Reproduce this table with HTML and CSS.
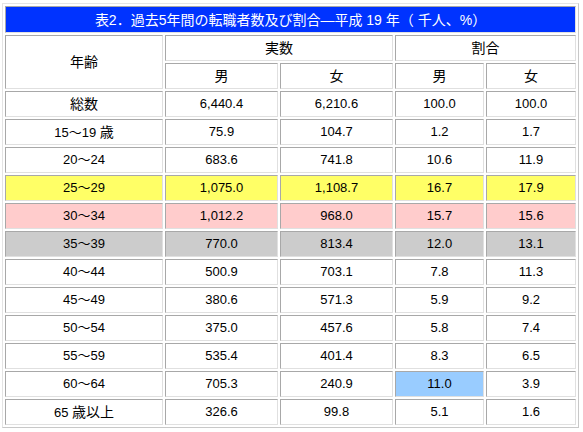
FILE: index.html
```html
<!DOCTYPE html>
<html lang="ja">
<head>
<meta charset="utf-8">
<link rel="stylesheet" href="styles.css">
</head>
<body>
<div class="wrap">
<table class="tbl">
  <colgroup>
    <col class="c1"><col class="c2"><col class="c3"><col class="c4"><col class="c5">
  </colgroup>
  <tr class="title-row"><td colspan="5" class="title">表2．過去5年間の転職者数及び割合―平成 19 年（ 千人、%）</td></tr>
  <tr><td rowspan="2"><span class="jp">年齢</span></td><td colspan="2"><span class="jp">実数</span></td><td colspan="2"><span class="jp">割合</span></td></tr>
  <tr><td><span class="jp">男</span></td><td><span class="jp">女</span></td><td><span class="jp">男</span></td><td><span class="jp">女</span></td></tr>
  <tr><td><span class="jp">総数</span></td><td>6,440.4</td><td>6,210.6</td><td>100.0</td><td>100.0</td></tr>
  <tr><td>15～19 <span class="jp">歳</span></td><td>75.9</td><td>104.7</td><td>1.2</td><td>1.7</td></tr>
  <tr><td>20～24</td><td>683.6</td><td>741.8</td><td>10.6</td><td>11.9</td></tr>
  <tr class="yellow"><td>25～29</td><td>1,075.0</td><td>1,108.7</td><td>16.7</td><td>17.9</td></tr>
  <tr class="pink"><td>30～34</td><td>1,012.2</td><td>968.0</td><td>15.7</td><td>15.6</td></tr>
  <tr class="gray"><td>35～39</td><td>770.0</td><td>813.4</td><td>12.0</td><td>13.1</td></tr>
  <tr><td>40～44</td><td>500.9</td><td>703.1</td><td>7.8</td><td>11.3</td></tr>
  <tr><td>45～49</td><td>380.6</td><td>571.3</td><td>5.9</td><td>9.2</td></tr>
  <tr><td>50～54</td><td>375.0</td><td>457.6</td><td>5.8</td><td>7.4</td></tr>
  <tr><td>55～59</td><td>535.4</td><td>401.4</td><td>8.3</td><td>6.5</td></tr>
  <tr><td>60～64</td><td>705.3</td><td>240.9</td><td class="blue">11.0</td><td>3.9</td></tr>
  <tr><td>65 <span class="jp">歳以上</span></td><td>326.6</td><td>99.8</td><td>5.1</td><td>1.6</td></tr>
</table>
</div>
</body>
</html>
```

FILE: styles.css
```css
html, body {
  margin: 0;
  padding: 0;
  background: #ffffff;
}
.wrap {
  padding: 3px 0 0 2px;
}
.tbl {
  width: 577px;
  table-layout: fixed;
  border-collapse: separate;
  border-spacing: 2px;
  border: 1px solid;
  border-color: #e4e4e4 #c8c8c8 #c8c8c8 #e4e4e4;
  font-family: "Liberation Sans", "Noto Sans CJK JP", sans-serif;
  font-size: 13px;
  color: #000;
}
.c1 { width: 158px; }
.c2 { width: 113px; }
.c3 { width: 113px; }
.c4 { width: 89px; }
.c5 { width: 90px; }
.tbl td {
  height: 24px;
  padding: 0;
  text-align: center;
  vertical-align: middle;
  border: 1px solid;
  border-color: #a8a8a8 #e0e0e0 #e0e0e0 #a8a8a8;
  line-height: 16px;
}
.jp {
  font-size: 14px;
}
.tbl td.title {
  height: 25px;
  background: #0033ff;
  color: #ffffff;
  font-size: 14px;
}
.yellow td { background: #ffff66; }
.pink td { background: #ffcccc; }
.gray td { background: #cccccc; }
.tbl td.blue { background: #99ccff; }
```
